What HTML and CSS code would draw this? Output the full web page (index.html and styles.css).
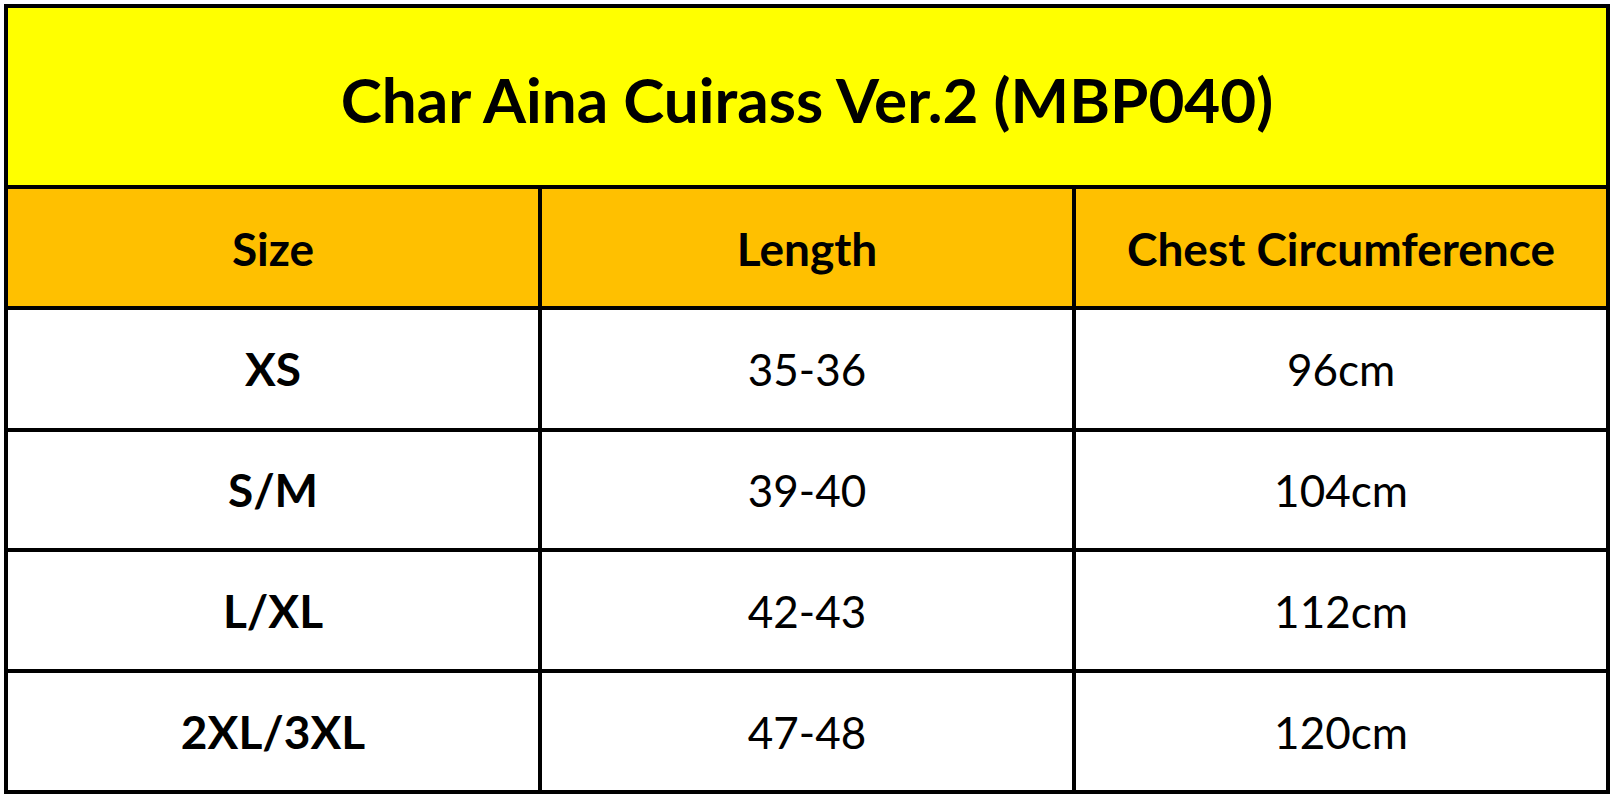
FILE: index.html
```html
<!DOCTYPE html>
<html lang="en">
<head>
<meta charset="utf-8">
<title>Char Aina Cuirass Ver.2 (MBP040)</title>
<link rel="stylesheet" href="styles.css">
</head>
<body>
<div class="sheet">
  <div class="cell title">Char Aina Cuirass Ver.2 (MBP040)</div>
  <div class="cell head">Size</div>
  <div class="cell head">Length</div>
  <div class="cell head">Chest Circumference</div>
  <div class="cell size">XS</div>
  <div class="cell val">35-36</div>
  <div class="cell val">96cm</div>
  <div class="cell size">S/M</div>
  <div class="cell val">39-40</div>
  <div class="cell val">104cm</div>
  <div class="cell size">L/XL</div>
  <div class="cell val">42-43</div>
  <div class="cell val">112cm</div>
  <div class="cell size">2XL/3XL</div>
  <div class="cell val">47-48</div>
  <div class="cell val">120cm</div>
</div>
</body>
</html>
```
FILE: styles.css
```css
html, body {
  background: #ffffff;
}
body {
  margin: 4px;
  font-family: Lato, "Open Sans", "Liberation Sans", sans-serif;
  color: #000000;
}
.sheet {
  display: grid;
  grid-template-columns: repeat(3, 530px);
  grid-template-rows: 177px 117px 118px 116px 117px 117px;
  gap: 4px;
  padding: 4px;
  background: #000000;
  width: max-content;
}
.cell {
  display: flex;
  align-items: center;
  justify-content: center;
  background: #ffffff;
  line-height: 1;
}
.title {
  grid-column: 1 / 4;
  background: #ffff00;
  font-weight: 700;
  font-size: 62px;
  padding-top: 4px;
}
.head {
  background: #ffc000;
  font-weight: 700;
  font-size: 46px;
  padding-top: 2px;
}
.size {
  font-weight: 700;
  font-size: 46px;
}
.val {
  font-weight: 400;
  font-size: 44px;
}
```
